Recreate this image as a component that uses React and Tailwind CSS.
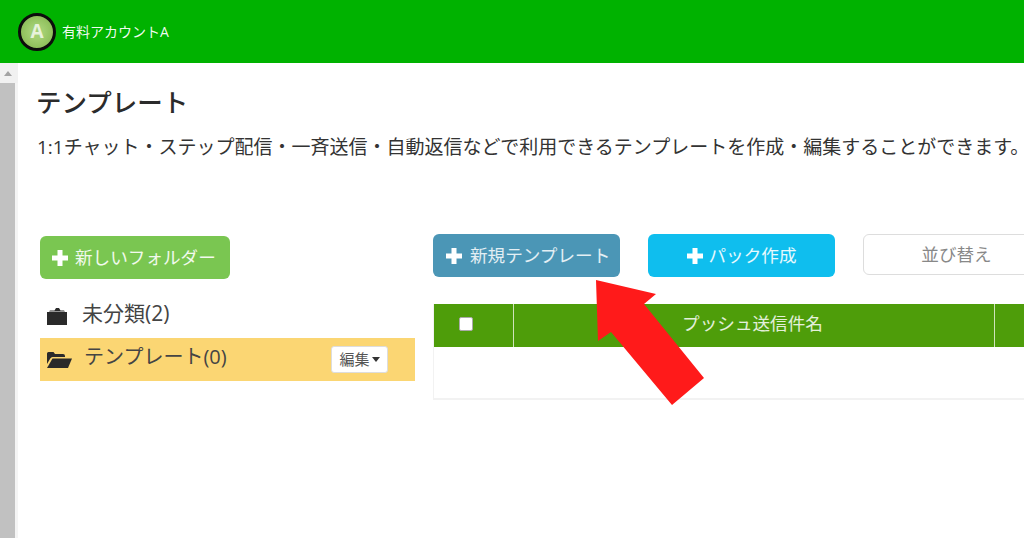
import React from "react";

const FONT = "[font-family:'Open_Sans','Noto_Sans_CJK_JP',sans-serif]";

function Plus({ className }) {
  return (
    <svg viewBox="0 0 16 16" className={className} fill="#fff">
      <path d="M5.500 0h5v5.500H16v5h-5.500V16h-5v-5.500H0v-5h5.500z" />
    </svg>
  );
}

function FolderClosed() {
  return (
    <svg viewBox="0 0 20 18" className="w-[20px] h-[18px] shrink-0 mt-[4px]" fill="#2a2a2a">
      <path d="M0 5h20v13H0z" />
      <path d="M3 3.500h4.500L9 1h3l1.500 2.500H17l1 1H2z" />
    </svg>
  );
}

function FolderOpen() {
  return (
    <svg viewBox="0 0 25 18" className="w-[25px] h-[18px] shrink-0 mt-[1px]" fill="#2a2a2a">
      <path d="M0 13V2.500Q0 1 1.500 1h5L8 3h8q2 0 2 2v1H5.500Q4 6 3.300 7.500z" />
      <path d="M5.500 7.500H25l-4 9.500H0z" />
    </svg>
  );
}

export default function App() {
  return (
    <div className={`w-[1024px] h-[538px] overflow-hidden bg-white relative ${FONT}`}>
      <header className="h-[63px] bg-[#00b200] flex items-center pl-[18px] gap-[6px]">
        <div className="w-[38px] h-[38px] rounded-full border-[3px] border-[#0c0c0c] bg-[radial-gradient(circle,#a3cf72_30%,#7fb34a_100%)] flex items-center justify-center text-white/75 font-bold text-[19px]">
          A
        </div>
        <span className="text-white/95 text-[14px]">有料アカウントA</span>
      </header>

      <div className="flex h-[475px]">
        <div className="w-[18px] shrink-0 flex flex-col">
          <div className="h-[20px] bg-[#f1f1f1] flex items-center justify-center">
            <div className="w-0 h-0 border-x-[4px] border-x-transparent border-b-[5px] border-b-[#a3a3a3] -ml-[3px]" />
          </div>
          <div className="flex-1 bg-[#f4f4f4]">
            <div className="w-[15px] h-full bg-[#c1c1c1]" />
          </div>
        </div>

        <main className="flex-1 min-w-0 pl-[19px]">
          <h1 className="-ml-[1px] mt-[23px] text-[25.5px] leading-[32px] font-medium text-[#2b2b2b] whitespace-nowrap">テンプレート</h1>
          <p className="mt-[17px] text-[19px] leading-[24px] text-[#333] whitespace-nowrap">
            1:1チャット・ステップ配信・一斉送信・自動返信などで利用できるテンプレートを作成・編集することができます。
          </p>

          <div className="flex mt-[76px] pl-[3px]">
            <aside className="w-[375px] shrink-0 pt-[1px]">
              <button className="w-[190px] h-[43px] rounded-[6px] bg-[#7ac651] text-white/90 text-[17.6px] flex items-center pl-[12px] gap-[7px]">
                <Plus className="w-[16px] h-[16px]" />
                新しいフォルダー
              </button>
              <div className="h-[48px] flex items-center pl-[7px] gap-[15px] text-[21px] text-[#444] mt-[16px] pb-[11px]">
                <FolderClosed />
                未分類(2)
              </div>
              <div className="h-[43px] bg-[#fbd673] flex items-center pl-[7px] pr-[27px] text-[20px] text-[#444] -mt-[5px]">
                <FolderOpen />
                <span className="ml-[12px] flex-1 pb-[5px]">テンプレート(0)</span>
                <span className="h-[27px] w-[57px] rounded-[3px] bg-white border border-[#ddd] text-[15px] text-[#555] flex items-center justify-center gap-[2px]">
                  編集
                  <span className="w-0 h-0 border-x-[4px] border-x-transparent border-t-[5px] border-t-[#333]" />
                </span>
              </div>
            </aside>

            <section className="ml-[18px] flex-1 min-w-0">
              <div className="flex gap-[28px] items-start -mt-[1px] overflow-hidden">
                <button className="w-[187px] h-[43px] shrink-0 rounded-[6px] bg-[#4b96b6] text-white/85 text-[17.6px] flex items-center pl-[13px] gap-[8px]">
                  <Plus className="w-[16px] h-[16px]" />
                  新規テンプレート
                </button>
                <button className="w-[187px] h-[43px] shrink-0 rounded-[6px] bg-[#0fbeee] text-white/90 text-[17.6px] flex items-center justify-center gap-[6px]">
                  <Plus className="w-[16px] h-[16px]" />
                  パック作成
                </button>
                <button className="w-[187px] h-[41px] shrink-0 rounded-[6px] bg-white border-[1.5px] border-[#ddd] text-[#888] text-[17.6px] flex items-center justify-center">
                  並び替え
                </button>
              </div>
              <div className="mt-[27px] border-b-2 border-l border-[#f2f2f2] h-[96px]">
                <div className="h-[43px] bg-[#4e9d0a] flex items-stretch text-white/85 text-[17.6px]">
                  <div className="w-[80px] shrink-0 border-r-[1.5px] border-[#cfe3bb] flex items-center pl-[25px]">
                    <span className="w-[14px] h-[14px] rounded-[2px] bg-white border border-[#aaa] -mt-[3px]" />
                  </div>
                  <div className="w-[481px] shrink-0 border-r-[1.5px] border-[#cfe3bb] flex items-center justify-center pb-[4px] pr-[3px]">
                    プッシュ送信件名
                  </div>
                  <div className="flex-1" />
                </div>
              </div>
            </section>
          </div>
        </main>
      </div>

      <svg viewBox="0 0 1024 538" className="absolute inset-0 w-[1024px] h-[538px] pointer-events-none">
        <polygon points="596,280 656,294 644,304 704,378 672,405 611,332 598,341" fill="#ff1a1a" />
      </svg>
    </div>
  );
}
